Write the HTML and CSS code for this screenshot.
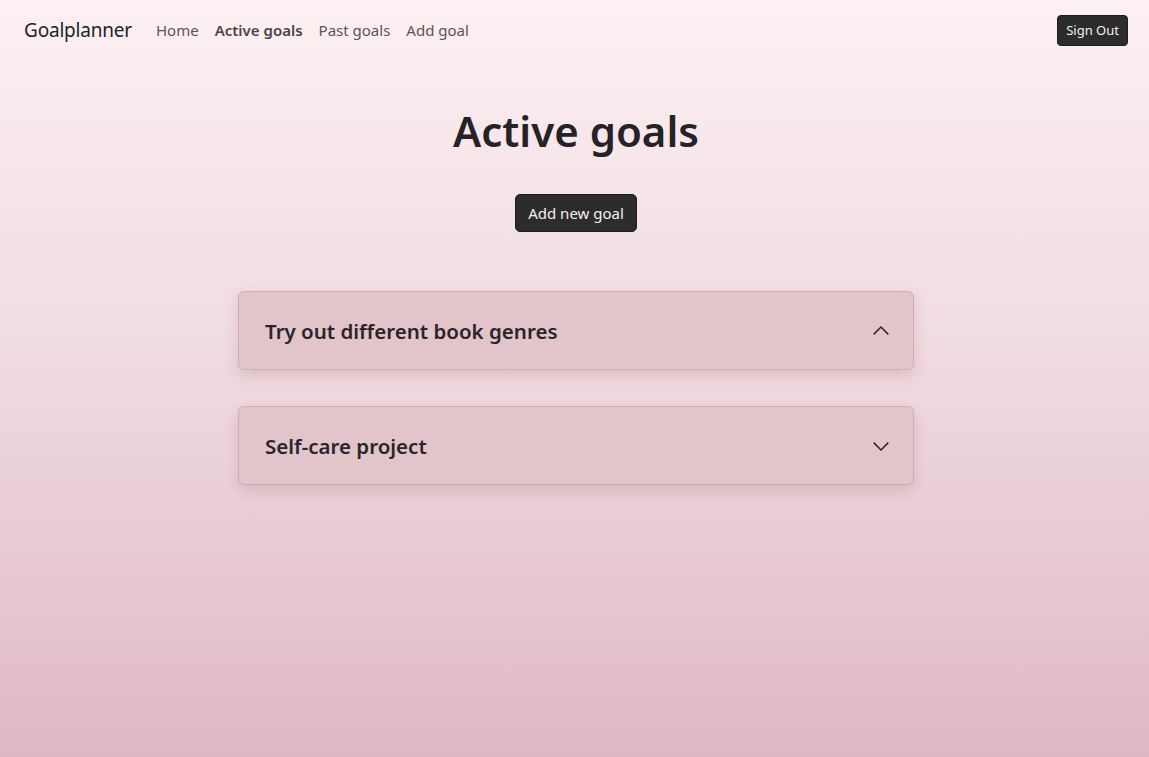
FILE: index.html
```html
<!DOCTYPE html>
<html lang="en">
<head>
<meta charset="utf-8">
<title>Goalplanner - Active goals</title>
<link rel="stylesheet" href="styles.css">
</head>
<body>
<nav class="navbar">
  <a class="brand" href="#">Goalplanner</a>
  <ul class="nav-links">
    <li><a class="nav-link" href="#">Home</a></li>
    <li><a class="nav-link active" href="#">Active goals</a></li>
    <li><a class="nav-link" href="#">Past goals</a></li>
    <li><a class="nav-link" href="#">Add goal</a></li>
  </ul>
  <button class="btn btn-sm">Sign Out</button>
</nav>
<main class="main">
  <h1 class="title">Active goals</h1>
  <button class="btn btn-md">Add new goal</button>
  <section class="goals">
    <div class="goal-card">
      <h2 class="goal-title">Try out different book genres</h2>
      <svg class="chevron" width="18" height="18" viewBox="0 0 16 16"><path d="M1.5 11 8 4.5 14.5 11" fill="none" stroke="#2b2528" stroke-width="1.3"/></svg>
    </div>
    <div class="goal-card">
      <h2 class="goal-title">Self-care project</h2>
      <svg class="chevron" width="18" height="18" viewBox="0 0 16 16"><path d="M1.5 5 8 11.5 14.5 5" fill="none" stroke="#2b2528" stroke-width="1.3"/></svg>
    </div>
  </section>
</main>
</body>
</html>
```
FILE: styles.css
```css
* { box-sizing: border-box; }
html, body { margin: 0; padding: 0; }
body {
  min-height: 100vh;
  font-family: "Noto Sans", "Open Sans", sans-serif;
  color: #212529;
  background: linear-gradient(to bottom, #fcf0f3 0%, #efd9de 50%, #dfb8c4 100%);
}
.navbar {
  display: flex;
  align-items: center;
  height: 60px;
  padding: 0 21px 0 24px;
}
.brand {
  font-size: 19px;
  color: #212529;
  text-decoration: none;
  margin-right: 16px;
  letter-spacing: -0.2px;
}
.nav-links {
  display: flex;
  list-style: none;
  margin: 0;
  padding: 0;
  flex: 1;
}
.nav-link {
  display: block;
  padding: 8px 8px;
  font-size: 15px;
  color: #5a5558;
  text-decoration: none;
}
.nav-link.active { color: #49444a; font-weight: 600; }
.btn {
  font-family: inherit;
  background: #2c2c2c;
  color: #f4f0f1;
  border: 1px solid #1e1e1e;
  border-radius: 4px;
  cursor: pointer;
}
.btn-sm { font-size: 13px; padding: 5px 8px; height: 31px; }
.btn-md { font-size: 15px; padding: 0 12px; height: 38px; border-radius: 5px; }
.main {
  display: flex;
  flex-direction: column;
  align-items: center;
  padding-left: 3px;
}
.title {
  font-size: 42px;
  font-weight: 600;
  margin: 43px 0 35px;
  line-height: 56px;
  color: #252325;
}
.goals {
  display: flex;
  flex-direction: column;
  gap: 36px;
  width: 676px;
  margin-top: 59px;
}
.goal-card {
  display: flex;
  align-items: center;
  justify-content: space-between;
  height: 79px;
  padding: 0 23px 0 26px;
  background: #e2c4cb;
  border: 1px solid #d4aab6;
  border-radius: 6px;
  box-shadow: 0 6px 14px rgba(120, 70, 85, 0.18);
}
.goal-title {
  margin: 0;
  font-size: 20.5px;
  font-weight: 600;
  color: #2a2528;
}
.chevron { display: block; }
```
